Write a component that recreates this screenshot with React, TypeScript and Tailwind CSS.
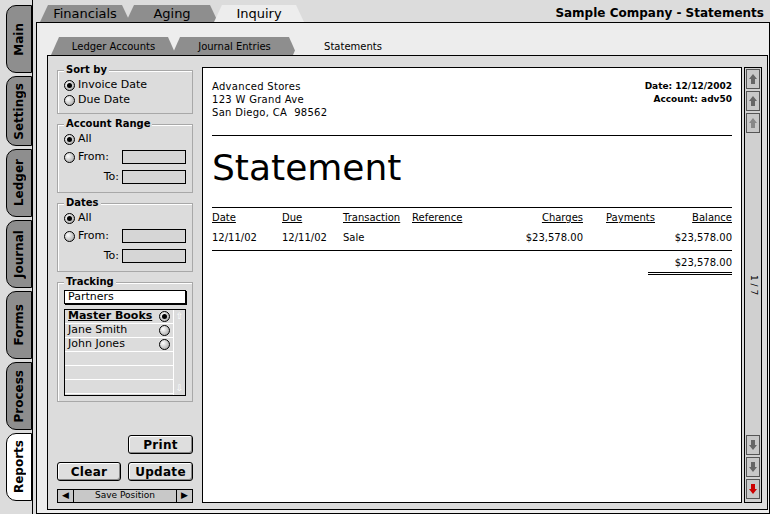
import React from "react";

const F = { fontFamily: "'DejaVu Sans', Verdana, sans-serif" };

function Radio({ on }: { on?: boolean }) {
  return (
    <span className="inline-flex w-[11px] h-[11px] rounded-full border border-black items-center justify-center shrink-0 bg-[radial-gradient(circle_at_35%_35%,#ffffff,#999999)]">
      {on && <span className="w-[5px] h-[5px] rounded-full bg-black" />}
    </span>
  );
}

function Group({ title, children, cls }: { title: string; children: React.ReactNode; cls?: string }) {
  return (
    <div className={"relative border border-[#a8a8a8] shadow-[inset_1px_1px_0_#fff] px-[6px] pt-[7px] pb-[5px] " + (cls || "")}>
      <span className="absolute -top-[7px] left-[6px] bg-[#dcdcdc] px-[2px] font-bold text-[10px] leading-[12px]">{title}</span>
      {children}
    </div>
  );
}

function Btn({ children, w }: { children: React.ReactNode; w: string }) {
  return (
    <div className={"h-[19px] border border-black rounded-[3px] bg-[#dedede] shadow-[inset_1px_1px_0_#fff,inset_-1px_-1px_0_#888] flex items-center justify-center font-bold text-[12px] tracking-wide " + w}>{children}</div>
  );
}

function VTab({ label, active, h }: { label: string; active?: boolean; h: string }) {
  return (
    <div className={"w-[26px] border border-black rounded-l-[10px] flex items-center justify-center " + h + (active ? " bg-white" : " bg-[#8e8e8e]")}>
      <span className="font-bold text-[12px] text-black" style={{ writingMode: "vertical-rl", transform: "rotate(180deg)" }}>{label}</span>
    </div>
  );
}

function HTab({ label, active, w, size }: { label: string; active?: boolean; w: string; size: string }) {
  return (
    <div className={"h-full flex items-center justify-center -mr-[4px] " + w + " " + size + (active ? " bg-[#ededed] z-10" : " bg-[#8e8e8e]")} style={{ clipPath: "polygon(8px 0,calc(100% - 8px) 0,100% 100%,0 100%)" }}>
      {label}
    </div>
  );
}

function SB({ children }: { children: React.ReactNode }) {
  return <div className="h-[20px] border border-[#555] bg-[#c8c8c8] flex items-center justify-center mb-[2px]">{children}</div>;
}

const Up = ({ c = "#666" }: { c?: string }) => <svg width="10" height="12" viewBox="0 0 10 12"><path d="M5 1 L9 6 H7 V11 H3 V6 H1 Z" fill={c} /></svg>;
const Down = ({ c = "#666" }: { c?: string }) => <svg width="10" height="12" viewBox="0 0 10 12"><path d="M5 11 L9 6 H7 V1 H3 V6 H1 Z" fill={c} /></svg>;

export default function App() {
  return (
    <div className="w-[770px] h-[514px] bg-[#dcdcdc] flex overflow-hidden text-black" style={F}>
      <div className="w-[33px] flex flex-col items-end pt-[5px] gap-[3px] border-r border-black">
        <VTab label="Main" h="h-[68px]" />
        <VTab label="Settings" h="h-[70px]" />
        <VTab label="Ledger" h="h-[68px]" />
        <VTab label="Journal" h="h-[68px]" />
        <VTab label="Forms" h="h-[68px]" />
        <VTab label="Process" h="h-[68px]" />
        <VTab label="Reports" active h="h-[68px]" />
      </div>
      <div className="flex-1 flex flex-col pl-[3px]">
        <div className="h-[22px] flex items-end pl-[4px] pt-[5px] relative">
          <HTab label="Financials" w="w-[90px]" size="text-[13px]" />
          <HTab label="Aging" w="w-[92px]" size="text-[13px]" />
          <HTab label="Inquiry" active w="w-[90px]" size="text-[13px]" />
          <div className="absolute right-[6px] top-[4px] font-bold text-[12px]">Sample Company - Statements</div>
        </div>
        <div className="flex-1 bg-[#ededed] border border-black flex flex-col pl-[10px] pt-[14px] pb-[3px] pr-[1px]">
          <div className="h-[18px] flex items-end pl-[4px]">
            <HTab label="Ledger Accounts" w="w-[125px]" size="text-[10px]" />
            <HTab label="Journal Entries" w="w-[125px]" size="text-[10px]" />
            <HTab label="Statements" active w="w-[120px]" size="text-[10px]" />
          </div>
          <div className="flex-1 bg-[#dcdcdc] border border-black flex pl-[9px] pr-[5px] pt-[11px] pb-[6px] gap-[9px] text-[11px]">
            <div className="w-[136px] flex flex-col">
              <Group title="Sort by" cls="mt-[3px]">
                <div className="flex items-center gap-[3px] h-[15px]"><Radio on />Invoice Date</div>
                <div className="flex items-center gap-[3px] h-[15px]"><Radio />Due Date</div>
              </Group>
              <Group title="Account Range" cls="mt-[10px]">
                <div className="flex items-center gap-[3px] h-[15px]"><Radio on />All</div>
                <div className="flex items-center gap-[3px] h-[20px]"><Radio />From:<span className="ml-auto w-[64px] h-[14px] border border-black bg-[#d6d6d6]" /></div>
                <div className="flex items-center gap-[3px] h-[20px] justify-end">To:<span className="w-[64px] h-[14px] border border-black bg-[#d6d6d6]" /></div>
              </Group>
              <Group title="Dates" cls="mt-[10px]">
                <div className="flex items-center gap-[3px] h-[15px]"><Radio on />All</div>
                <div className="flex items-center gap-[3px] h-[20px]"><Radio />From:<span className="ml-auto w-[64px] h-[14px] border border-black bg-[#d6d6d6]" /></div>
                <div className="flex items-center gap-[3px] h-[20px] justify-end">To:<span className="w-[64px] h-[14px] border border-black bg-[#d6d6d6]" /></div>
              </Group>
              <Group title="Tracking" cls="mt-[10px]">
                <div className="h-[14px] border border-black bg-white px-[3px] flex items-center shadow-[1px_1px_0_#000]">Partners</div>
                <div className="mt-[5px] h-[87px] border border-black bg-white flex">
                  <div className="flex-1 bg-[#dcdcdc]">
                    {[["Master Books", true], ["Jane Smith", false], ["John Jones", false], ["", null], ["", null], ["", null]].map(([n, on], i) => (
                      <div key={i} className="h-[14px] border-b border-white flex items-center px-[3px] justify-between">
                        <span className={on ? "font-bold underline" : ""}>{n as string}</span>
                        {on !== null && <Radio on={on as boolean} />}
                      </div>
                    ))}
                  </div>
                  <div className="w-[12px] border-l border-white bg-[#dcdcdc] flex flex-col justify-between items-center text-white text-[9px]"><span>⇧</span><span>⇩</span></div>
                </div>
              </Group>
              <div className="flex-1" />
              <div className="flex justify-end"><Btn w="w-[65px]">Print</Btn></div>
              <div className="flex justify-between mt-[8px]"><Btn w="w-[64px]">Clear</Btn><Btn w="w-[65px]">Update</Btn></div>
              <div className="mt-[8px] h-[14px] border border-black flex items-center bg-[#c8c8c8] text-[9px]">
                <span className="w-[16px] border-r border-black h-full flex items-center justify-center">◀</span>
                <span className="flex-1 text-center">Save Position</span>
                <span className="w-[16px] border-l border-black h-full flex items-center justify-center">▶</span>
              </div>
            </div>
            <div className="flex-1 flex">
              <div className="flex-1 bg-white border border-black px-[9px] pt-[12px] text-[10px]">
                <div className="flex justify-between">
                  <div className="leading-[13px] tracking-[0.3px]">Advanced Stores<br />123 W Grand Ave<br />San Diego, CA&nbsp; 98562</div>
                  <div className="font-bold text-right text-[9px] leading-[13px]">Date: 12/12/2002<br />Account: adv50</div>
                </div>
                <div className="border-t border-black mt-[16px]" />
                <div className="text-[36px] leading-[40px] mt-[12px]">Statement</div>
                <div className="border-t border-black mt-[19px]" />
                <div className="flex underline mt-[2px] h-[15px] items-center">
                  <span className="w-[70px]">Date</span><span className="w-[61px]">Due</span><span className="w-[69px]">Transaction</span><span className="w-[60px]">Reference</span>
                  <span className="w-[111px] text-right">Charges</span><span className="w-[72px] text-right">Payments</span><span className="flex-1 text-right">Balance</span>
                </div>
                <div className="flex mt-[6px] h-[13px] items-center">
                  <span className="w-[70px]">12/11/02</span><span className="w-[61px]">12/11/02</span><span className="w-[69px]">Sale</span><span className="w-[60px]"></span>
                  <span className="w-[111px] text-right">$23,578.00</span><span className="w-[72px]"></span><span className="flex-1 text-right">$23,578.00</span>
                </div>
                <div className="border-t border-black mt-[6px]" />
                <div className="flex justify-end"><span className="w-[84px] text-right pt-[4px] pb-[2px] border-b-[3px] border-double border-black">$23,578.00</span></div>
              </div>
              <div className="w-[18px] ml-[2px] border border-black bg-[#d0d0d0] flex flex-col p-[1px]">
                <SB><Up /></SB><SB><Up /></SB><SB><Up c="#888" /></SB>
                <div className="flex-1 flex items-center justify-center"><span className="text-[9px]" style={{ writingMode: "vertical-rl" }}>1 / 7</span></div>
                <SB><Down /></SB><SB><Down /></SB><SB><Down c="#c00" /></SB>
              </div>
            </div>
          </div>
        </div>
      </div>
    </div>
  );
}
